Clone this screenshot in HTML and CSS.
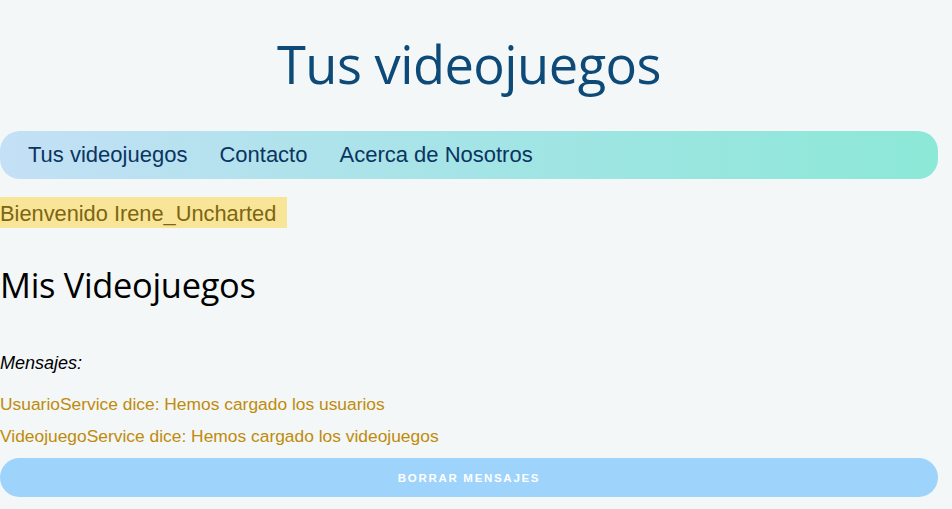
FILE: index.html
```html
<!DOCTYPE html>
<html lang="es">
<head>
<meta charset="utf-8">
<title>Tus videojuegos</title>
<link rel="stylesheet" href="styles.css">
</head>
<body>
<div class="page">
  <h1 class="title">Tus videojuegos</h1>
  <nav class="nav">
    <a href="#">Tus videojuegos</a>
    <a href="#">Contacto</a>
    <a href="#">Acerca de Nosotros</a>
  </nav>
  <div class="welcome">Bienvenido Irene_Uncharted</div>
  <h2 class="section">Mis Videojuegos</h2>
  <div class="messages">
    <h4 class="messages-title">Mensajes:</h4>
    <p class="msg">UsuarioService dice: Hemos cargado los usuarios</p>
    <p class="msg">VideojuegoService dice: Hemos cargado los videojuegos</p>
    <button class="clear">BORRAR MENSAJES</button>
  </div>
</div>
</body>
</html>
```
FILE: styles.css
```css
html, body {
  margin: 0;
  padding: 0;
  background: #f3f7f8;
}
.page {
  width: 938px;
  font-family: "Liberation Sans", Arial, sans-serif;
}
.title {
  margin: 0;
  padding-top: 28px;
  height: 131px;
  box-sizing: border-box;
  text-align: center;
  font-family: "Open Sans", sans-serif;
  font-weight: 400;
  font-size: 52.4px;
  line-height: 72px;
  color: #0d4a78;
  letter-spacing: -0.5px;
}
.nav {
  display: flex;
  gap: 32px;
  align-items: center;
  height: 48px;
  padding-left: 28px;
  border-radius: 20px;
  background: linear-gradient(90deg, #c4e0f6 0%, #a4e4e6 50%, #8ce8d7 100%);
}
.nav a {
  text-decoration: none;
  color: #0a3560;
  font-size: 22px;
}
.welcome {
  display: inline-block;
  vertical-align: top;
  margin-top: 18px;
  height: 31px;
  line-height: 33px;
  width: 287px;
  box-sizing: border-box;
  background: #f9e597;
  color: #7d6513;
  font-size: 21.8px;
}
.section {
  margin: 35px 0 0;
  font-family: "Open Sans", sans-serif;
  font-weight: 400;
  font-size: 34.4px;
  line-height: 44px;
  color: #000;
  letter-spacing: -0.3px;
}
.messages {
  margin-top: 46px;
}
.messages-title {
  margin: 0;
  font-style: italic;
  font-weight: 400;
  font-size: 18px;
  line-height: 20px;
}
.msg {
  margin: 21px 0 0;
  font-size: 17.4px;
  line-height: 20px;
  color: #c08b0a;
}
.msg + .msg {
  margin-top: 12px;
}
.clear {
  display: block;
  margin-top: 12px;
  width: 938px;
  height: 39px;
  border: none;
  border-radius: 20px;
  background: #9ed3fc;
  color: #fff;
  font-family: "Liberation Sans", Arial, sans-serif;
  font-weight: 700;
  font-size: 11.5px;
  letter-spacing: 1.7px;
  padding: 0;
}
```
